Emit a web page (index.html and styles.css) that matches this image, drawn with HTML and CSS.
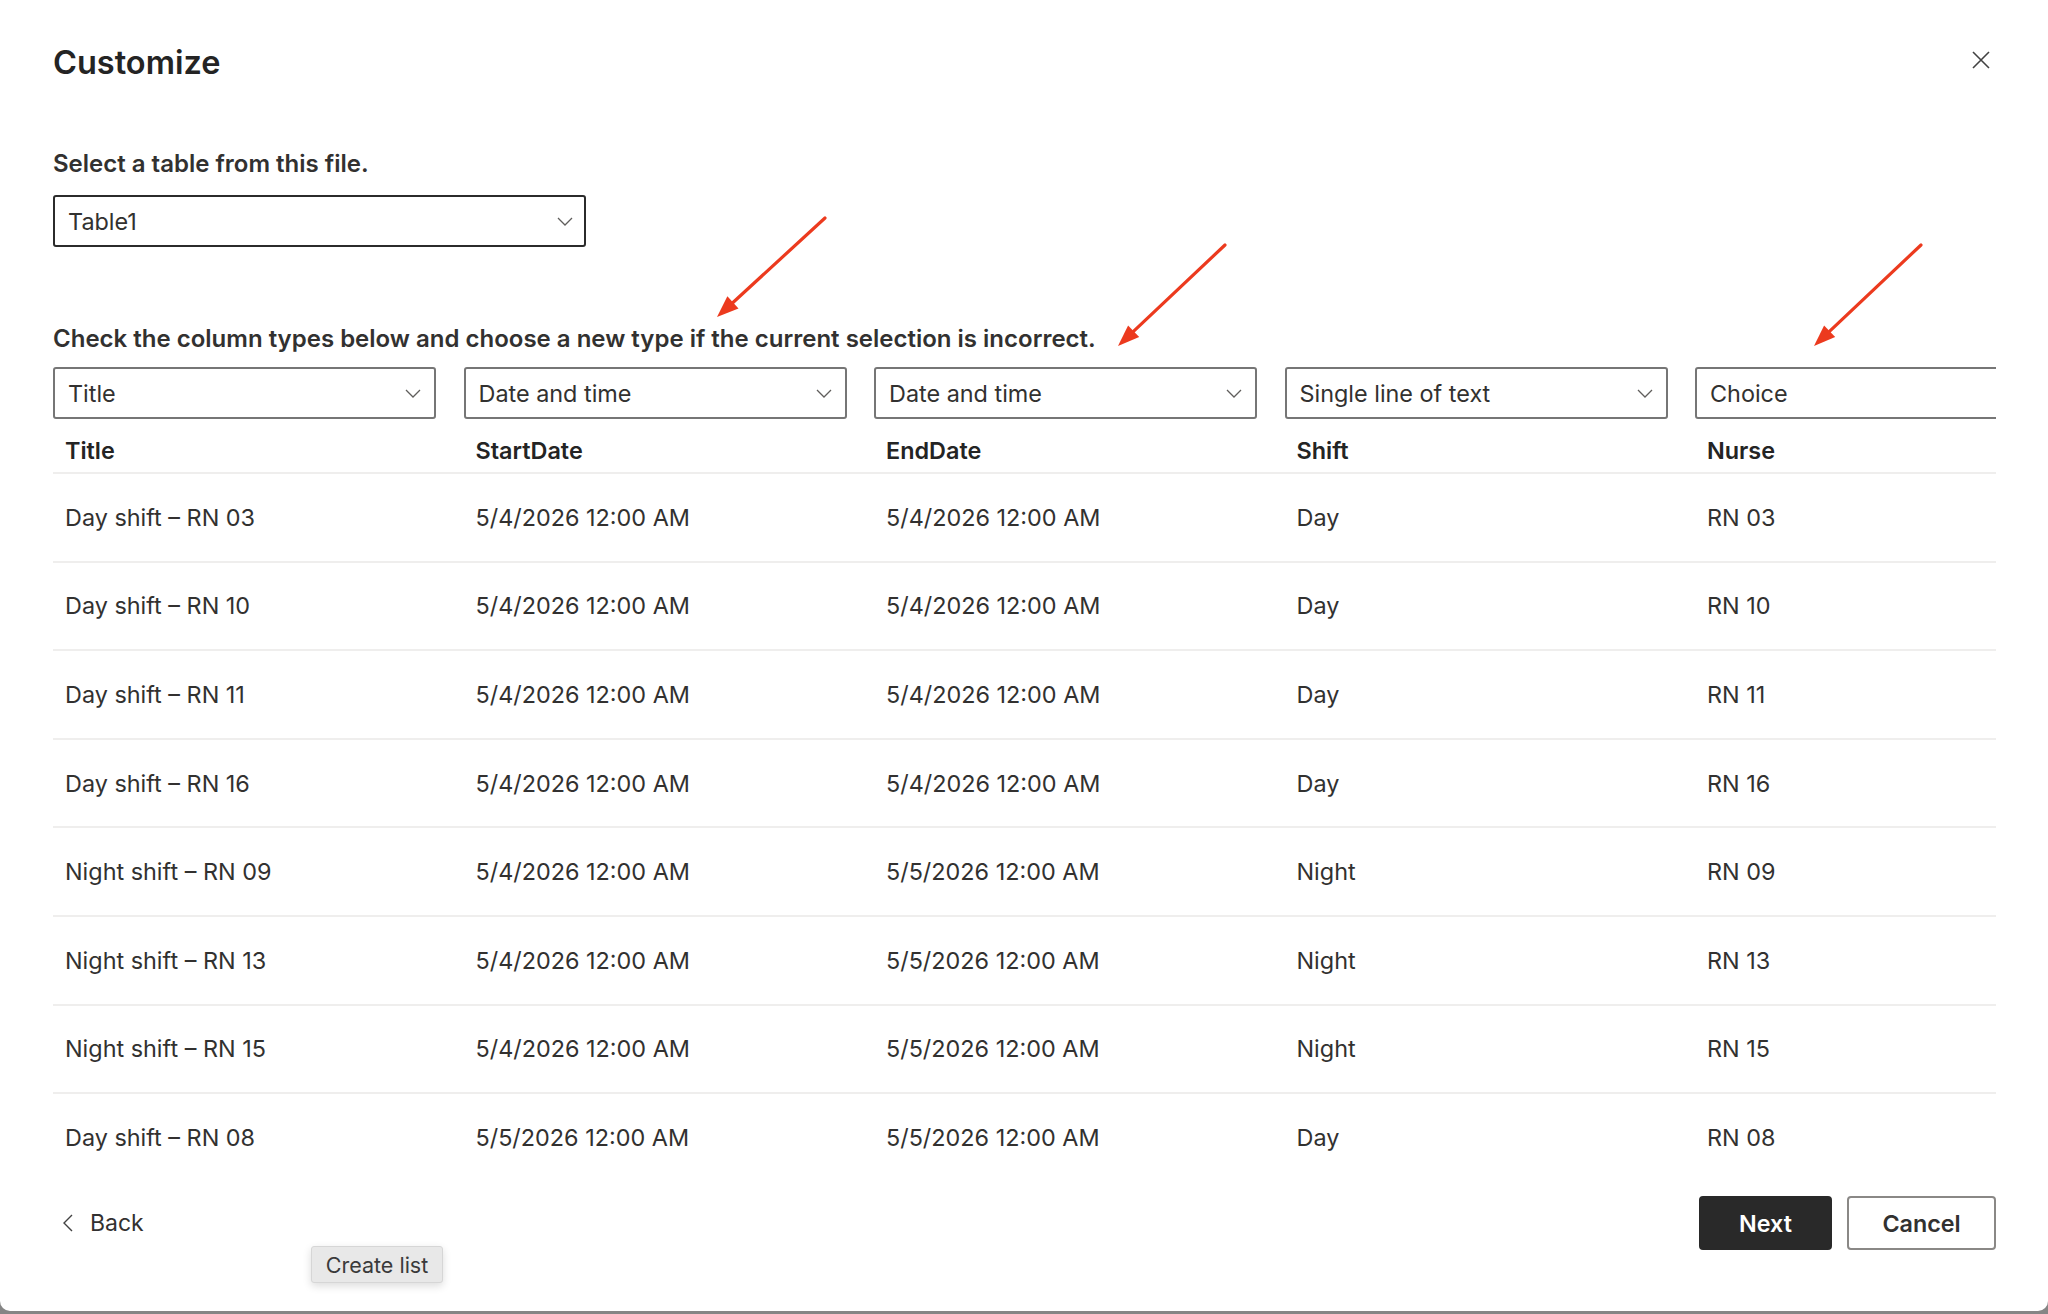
FILE: index.html
```html
<!DOCTYPE html>
<html lang="en">
<head>
    <meta charset="UTF-8">
    <meta name="viewport" content="width=device-width, initial-scale=1.0">
    <title>Customize</title>
    <link rel="stylesheet" href="styles.css">
</head>
<body>
    <div class="dialog">
        <div class="dialog-head">
            <h1>Customize</h1>
            <button class="close" aria-label="Close">
                <svg width="18" height="18" viewBox="0 0 18 18"><path d="M1 1L17 17M17 1L1 17" stroke="#424242" stroke-width="1.6" fill="none"/></svg>
            </button>
        </div>

        <div class="label table-label">Select a table from this file.</div>
        <div class="select select-table">
            <span>Table1</span>
            <svg class="chev" width="16" height="9" viewBox="0 0 16 9"><path d="M1 1l7 7 7-7" stroke="#605e5c" stroke-width="1.3" fill="none"/></svg>
        </div>

        <div class="label hint">Check the column types below and choose a new type if the current selection is incorrect.</div>

        <div class="grid-wrap">
            <div class="grid">
                <div class="types">
                    <div class="select"><span>Title</span><svg class="chev" width="16" height="9" viewBox="0 0 16 9"><path d="M1 1l7 7 7-7" stroke="#605e5c" stroke-width="1.3" fill="none"/></svg></div>
                    <div class="select"><span>Date and time</span><svg class="chev" width="16" height="9" viewBox="0 0 16 9"><path d="M1 1l7 7 7-7" stroke="#605e5c" stroke-width="1.3" fill="none"/></svg></div>
                    <div class="select"><span>Date and time</span><svg class="chev" width="16" height="9" viewBox="0 0 16 9"><path d="M1 1l7 7 7-7" stroke="#605e5c" stroke-width="1.3" fill="none"/></svg></div>
                    <div class="select"><span>Single line of text</span><svg class="chev" width="16" height="9" viewBox="0 0 16 9"><path d="M1 1l7 7 7-7" stroke="#605e5c" stroke-width="1.3" fill="none"/></svg></div>
                    <div class="select"><span>Choice</span><svg class="chev" width="16" height="9" viewBox="0 0 16 9"><path d="M1 1l7 7 7-7" stroke="#605e5c" stroke-width="1.3" fill="none"/></svg></div>
                </div>

                <div class="row head">
                    <div class="cell">Title</div>
                    <div class="cell">StartDate</div>
                    <div class="cell">EndDate</div>
                    <div class="cell">Shift</div>
                    <div class="cell">Nurse</div>
                </div>

                <div class="row">
                    <div class="cell">Day shift – RN 03</div>
                    <div class="cell">5/4/2026 12:00 AM</div>
                    <div class="cell">5/4/2026 12:00 AM</div>
                    <div class="cell">Day</div>
                    <div class="cell">RN 03</div>
                </div>
                <div class="row">
                    <div class="cell">Day shift – RN 10</div>
                    <div class="cell">5/4/2026 12:00 AM</div>
                    <div class="cell">5/4/2026 12:00 AM</div>
                    <div class="cell">Day</div>
                    <div class="cell">RN 10</div>
                </div>
                <div class="row">
                    <div class="cell">Day shift – RN 11</div>
                    <div class="cell">5/4/2026 12:00 AM</div>
                    <div class="cell">5/4/2026 12:00 AM</div>
                    <div class="cell">Day</div>
                    <div class="cell">RN 11</div>
                </div>
                <div class="row">
                    <div class="cell">Day shift – RN 16</div>
                    <div class="cell">5/4/2026 12:00 AM</div>
                    <div class="cell">5/4/2026 12:00 AM</div>
                    <div class="cell">Day</div>
                    <div class="cell">RN 16</div>
                </div>
                <div class="row">
                    <div class="cell">Night shift – RN 09</div>
                    <div class="cell">5/4/2026 12:00 AM</div>
                    <div class="cell">5/5/2026 12:00 AM</div>
                    <div class="cell">Night</div>
                    <div class="cell">RN 09</div>
                </div>
                <div class="row">
                    <div class="cell">Night shift – RN 13</div>
                    <div class="cell">5/4/2026 12:00 AM</div>
                    <div class="cell">5/5/2026 12:00 AM</div>
                    <div class="cell">Night</div>
                    <div class="cell">RN 13</div>
                </div>
                <div class="row">
                    <div class="cell">Night shift – RN 15</div>
                    <div class="cell">5/4/2026 12:00 AM</div>
                    <div class="cell">5/5/2026 12:00 AM</div>
                    <div class="cell">Night</div>
                    <div class="cell">RN 15</div>
                </div>
                <div class="row">
                    <div class="cell">Day shift – RN 08</div>
                    <div class="cell">5/5/2026 12:00 AM</div>
                    <div class="cell">5/5/2026 12:00 AM</div>
                    <div class="cell">Day</div>
                    <div class="cell">RN 08</div>
                </div>
            </div>
        </div>

        <div class="dialog-foot">
            <button class="back">
                <svg width="10" height="18" viewBox="0 0 10 18"><path d="M9 1L1 9l8 8" stroke="#424242" stroke-width="1.4" fill="none"/></svg>
                <span>Back</span>
            </button>
            <div class="actions">
                <button class="btn btn-primary">Next</button>
                <button class="btn">Cancel</button>
            </div>
        </div>

        <div class="tooltip">Create list</div>

        <!-- red callouts pointing at the type pickers -->
        <svg class="marks" width="2048" height="1314" viewBox="0 0 2048 1314">
            <g stroke="#ec3a1e" stroke-width="3.2" stroke-linecap="round" fill="#ec3a1e">
                <line x1="825" y1="218" x2="733" y2="302.5"/>
                <polygon points="717,317 738.5,308.4 727.4,296.3" stroke="none"/>
                <line x1="1225" y1="245" x2="1133.5" y2="331.3"/>
                <polygon points="1118,346 1139.2,337.1 1128.1,325.4" stroke="none"/>
                <line x1="1921" y1="245" x2="1829.5" y2="331.3"/>
                <polygon points="1814,346 1835.2,337.1 1824.1,325.4" stroke="none"/>
            </g>
        </svg>
    </div>
</body>
</html>
```

FILE: styles.css
```css
* {
    margin: 0;
    padding: 0;
    box-sizing: border-box;
}

body {
    font-family: Inter, "Noto Sans", sans-serif;
    background: #858585;
    color: #323130;
    height: 1314px;
    overflow: hidden;
}

.dialog {
    position: relative;
    height: 1311px;
    background: #fff;
    border-radius: 0 0 10px 10px;
    padding: 42px 52px 0 53px;
}

.dialog-head {
    display: flex;
    align-items: center;
    justify-content: space-between;
    height: 40px;
}

.dialog-head h1 {
    font-size: 32.5px;
    font-weight: 600;
    color: #242424;
}

.close {
    width: 30px;
    height: 30px;
    border: none;
    background: none;
    display: flex;
    align-items: center;
    justify-content: center;
    margin-top: -4px;
}

.label {
    font-size: 24px;
    font-weight: 600;
    line-height: 28px;
    color: #323130;
}

.table-label {
    margin-top: 68px;
}

.select {
    height: 52px;
    border: 2px solid #767676;
    border-radius: 3px;
    display: flex;
    align-items: center;
    justify-content: space-between;
    padding: 0 13px 0 13px;
    font-size: 23.4px;
    color: #323130;
    background: #fff;
}

.select-table {
    width: 533px;
    margin-top: 17px;
    padding-right: 11px;
    border-color: #2b2b2b;
}

.chev {
    flex-shrink: 0;
}

.hint {
    margin-top: 78px;
}

.grid-wrap {
    margin-top: 14px;
    height: 803px;
    overflow: hidden;
}

.grid {
    width: 2060px;
}

.types {
    display: grid;
    grid-template-columns: repeat(5, 383px);
    column-gap: 27.5px;
}

.row {
    display: grid;
    grid-template-columns: repeat(5, 410.5px);
    height: 88.6px;
    align-items: center;
    border-bottom: 2px solid #efeeed;
    width: 1943px;
    font-size: 23.4px;
    color: #323130;
}

.row .cell {
    padding-left: 12px;
    white-space: nowrap;
}

.row.head {
    height: 55px;
    align-items: end;
    padding-bottom: 7px;
    font-weight: 600;
    color: #242424;
}

.dialog-foot {
    display: flex;
    align-items: center;
    justify-content: space-between;
    margin-top: 26px;
}

.back {
    display: flex;
    align-items: center;
    gap: 17px;
    border: none;
    background: none;
    font-family: inherit;
    font-size: 23px;
    color: #323130;
    padding-left: 10px;
}

.actions {
    display: flex;
    gap: 15px;
}

.btn {
    height: 54px;
    width: 149px;
    border: 2px solid #8a8886;
    border-radius: 4px;
    background: #fff;
    font-family: inherit;
    font-size: 23.3px;
    font-weight: 600;
    color: #323130;
}

.btn-primary {
    width: 133px;
    background: #292929;
    border-color: #292929;
    color: #fff;
}

.tooltip {
    position: absolute;
    left: 311px;
    top: 1246px;
    width: 132px;
    height: 37px;
    background: #e8e8e8;
    border: 1px solid #d6d6d6;
    border-radius: 3px;
    box-shadow: 0 3px 8px rgba(0, 0, 0, 0.14);
    font-size: 21.5px;
    color: #3a3a3a;
    display: flex;
    align-items: center;
    justify-content: center;
}

.marks {
    position: absolute;
    left: 0;
    top: 0;
    pointer-events: none;
}
```
